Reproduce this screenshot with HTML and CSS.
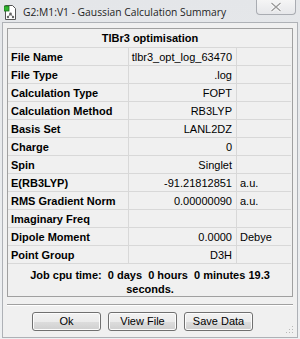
FILE: index.html
```html
<!DOCTYPE html>
<html>
<head>
<meta charset="utf-8">
<link rel="stylesheet" href="styles.css">
</head>
<body>
<div class="window">
  <div class="titlebar">
    <svg class="appicon" width="13" height="15" viewBox="0 0 13 15">
      <path d="M1.5 0.5h7l3 3v11h-10z" fill="#fff" stroke="#555"/>
      <rect x="0" y="1" width="5" height="5" fill="#2fb52f" stroke="#1d6d1d" stroke-width="0.8"/>
      <circle cx="6.5" cy="9" r="1.4" fill="#666"/>
      <circle cx="4" cy="12" r="1.2" fill="#666"/>
      <circle cx="9" cy="12" r="1.2" fill="#666"/>
      <path d="M6.5 9L4 12M6.5 9L9 12" stroke="#666" stroke-width="0.8"/>
    </svg>
    <span class="title">G2:M1:V1 - Gaussian Calculation Summary</span>
    <div class="close">
      <svg width="12" height="10" viewBox="0 0 12 10">
        <path d="M1.5 1l9 8M10.5 1l-9 8" stroke="#fff" stroke-width="3"/>
        <path d="M1.5 1l9 8M10.5 1l-9 8" stroke="#9a9a9a" stroke-width="1.4"/>
      </svg>
    </div>
  </div>
  <div class="client">
    <div class="box">
      <div class="caption">TlBr3 optimisation</div>
      <div class="grid">
        <div class="lab">File Name</div><div class="val">tlbr3_opt_log_63470</div><div class="unit"></div>
        <div class="lab">File Type</div><div class="val">.log</div><div class="unit"></div>
        <div class="lab">Calculation Type</div><div class="val">FOPT</div><div class="unit"></div>
        <div class="lab">Calculation Method</div><div class="val">RB3LYP</div><div class="unit"></div>
        <div class="lab">Basis Set</div><div class="val">LANL2DZ</div><div class="unit"></div>
        <div class="lab">Charge</div><div class="val">0</div><div class="unit"></div>
        <div class="lab">Spin</div><div class="val">Singlet</div><div class="unit"></div>
        <div class="lab">E(RB3LYP)</div><div class="val">-91.21812851</div><div class="unit">a.u.</div>
        <div class="lab">RMS Gradient Norm</div><div class="val">0.00000090</div><div class="unit">a.u.</div>
        <div class="lab">Imaginary Freq</div><div class="val"></div><div class="unit"></div>
        <div class="lab">Dipole Moment</div><div class="val">0.0000</div><div class="unit">Debye</div>
        <div class="lab">Point Group</div><div class="val">D3H</div><div class="unit"></div>
      </div>
      <div class="cpu">Job cpu time:&nbsp; 0 days&nbsp; 0 hours&nbsp; 0 minutes 19.3<br>seconds.</div>
    </div>
    <div class="sep"></div>
    <div class="buttons">
      <div class="btn">Ok</div>
      <div class="btn">View File</div>
      <div class="btn">Save Data</div>
    </div>
    <svg class="grip" width="8" height="8" viewBox="0 0 8 8">
      <g fill="#b8b8b8">
        <rect x="6" y="0" width="1" height="1"/>
        <rect x="3" y="3" width="1" height="1"/><rect x="6" y="3" width="1" height="1"/>
        <rect x="0" y="6" width="1" height="1"/><rect x="3" y="6" width="1" height="1"/><rect x="6" y="6" width="1" height="1"/>
      </g>
    </svg>
  </div>
</div>
</body>
</html>
```

FILE: styles.css
```css
html, body {
  margin: 0;
  padding: 0;
}
body {
  width: 300px;
  height: 339px;
  background: #e9ebee;
  font-family: "Liberation Sans", Arial, sans-serif;
  overflow: hidden;
}
.window {
  width: 300px;
  height: 339px;
  box-sizing: border-box;
  padding: 0 2px 1px 2px;
  display: flex;
  flex-direction: column;
  background: linear-gradient(#e4e6e9, #eef0f2);
}
.titlebar {
  height: 22px;
  display: flex;
  align-items: center;
  position: relative;
  flex: none;
}
.appicon {
  margin-left: 2px;
  margin-top: 2px;
}
.title {
  margin-left: 6px;
  margin-top: 1px;
  font-family: "Open Sans", "DejaVu Sans", sans-serif;
  font-size: 10.3px;
  color: #1e1e1e;
}
.close {
  position: absolute;
  right: 2px;
  top: -1px;
  width: 40px;
  height: 16px;
  box-sizing: border-box;
  border: 1px solid #a9acb2;
  border-top: none;
  border-radius: 0 0 4px 4px;
  background: linear-gradient(#f6f6f6, #e6e7ea);
  display: flex;
  align-items: center;
  justify-content: center;
}
.client {
  flex: 1;
  border: 1px solid #aeb1b6;
  background: #f0f0f0;
  position: relative;
  padding: 5px 4px 0 4px;
}
.box {
  border: 1px solid #a0a0a0;
  height: 269px;
  box-sizing: border-box;
  background: #f0f0f0;
}
.caption {
  height: 18px;
  border-bottom: 1px solid #d8d8d8;
  font-weight: bold;
  font-size: 11px;
  text-align: center;
  line-height: 18px;
  color: #000;
}
.grid {
  display: grid;
  grid-template-columns: 121px 108px 54px;
  grid-auto-rows: 18px;
}
.grid > div {
  border-bottom: 1px solid #d8d8d8;
  font-size: 11px;
  line-height: 18px;
  color: #000;
  white-space: nowrap;
  overflow: hidden;
}
.lab {
  font-weight: bold;
  padding-left: 3px;
  border-right: 1px solid #d8d8d8;
}
.val {
  text-align: right;
  padding-right: 4px;
  border-right: 1px solid #d8d8d8;
}
.unit {
  padding-left: 3px;
}
.cpu {
  font-weight: bold;
  font-size: 11px;
  text-align: center;
  line-height: 14px;
  padding-top: 4px;
  color: #000;
}
.sep {
  margin-top: 7px;
  height: 0;
  border-top: 1px solid #a0a0a0;
  border-bottom: 1px solid #ffffff;
}
.buttons {
  display: flex;
  gap: 7px;
  margin-top: 6px;
  padding-left: 25px;
}
.btn {
  width: 69px;
  height: 19px;
  box-sizing: border-box;
  border: 1px solid #707070;
  border-radius: 3px;
  background: linear-gradient(#f2f2f2 0%, #ebebeb 50%, #dddddd 51%, #cfcfcf 100%);
  box-shadow: inset 0 0 0 1px #fcfcfc;
  font-size: 11px;
  line-height: 17px;
  text-align: center;
  color: #000;
}
.grip {
  position: absolute;
  right: 3px;
  bottom: 3px;
}
```
